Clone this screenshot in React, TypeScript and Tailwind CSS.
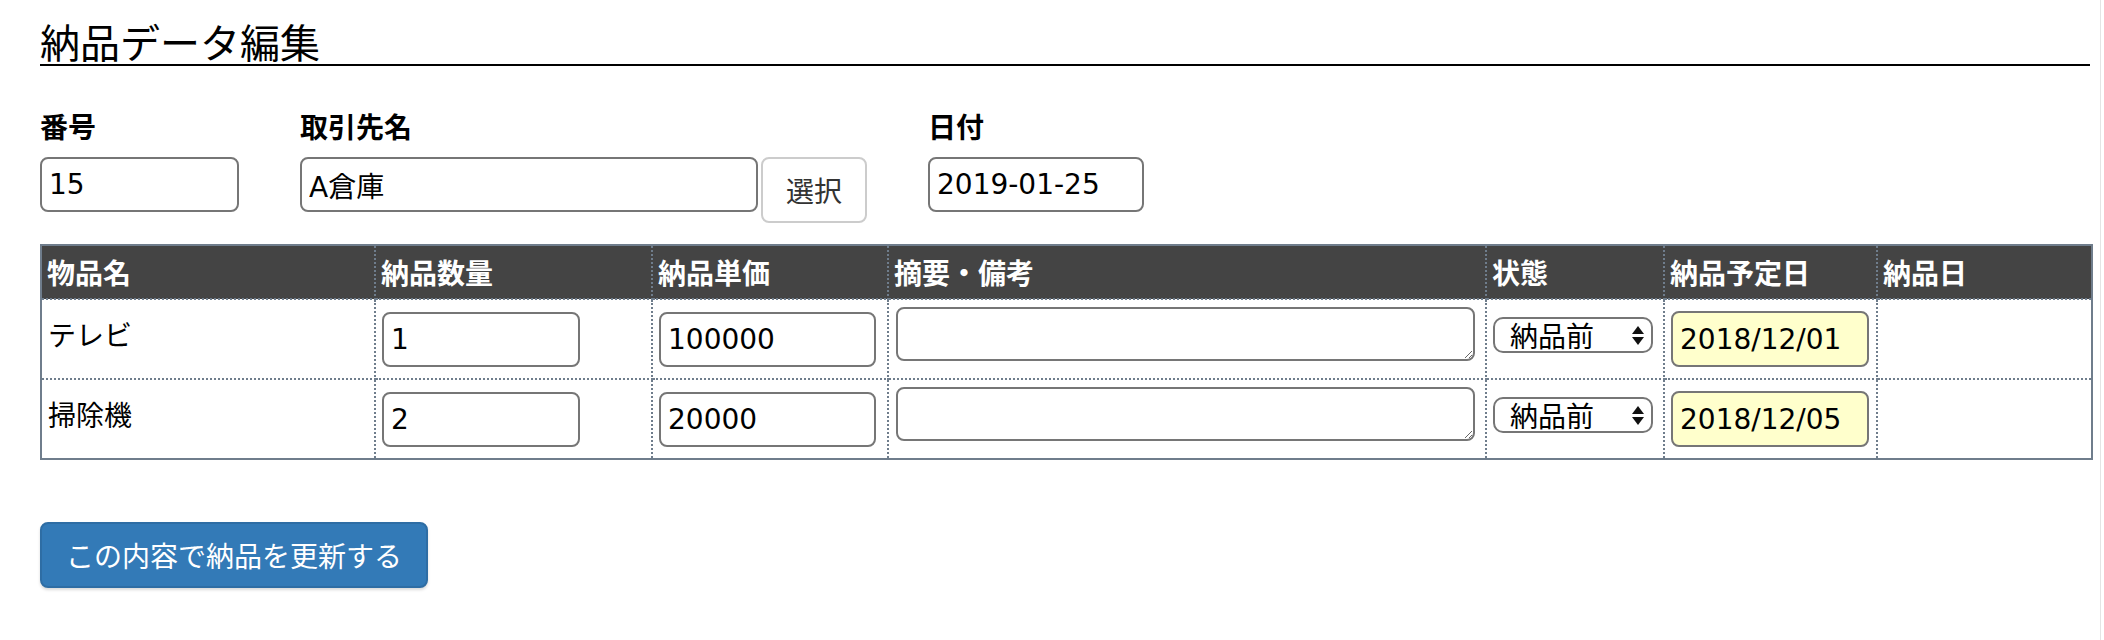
import React from 'react';

const items = [
  { id: 1, name: 'テレビ', qty: '1', price: '100000', plan: '2018/12/01' },
  { id: 2, name: '掃除機', qty: '2', price: '20000', plan: '2018/12/05' },
];

const columns = [
  { label: '物品名', width: 334 },
  { label: '納品数量', width: 277 },
  { label: '納品単価', width: 236 },
  { label: '摘要・備考', width: 598 },
  { label: '状態', width: 178 },
  { label: '納品予定日', width: 213 },
  { label: '納品日', width: 215 },
];

const jp = { fontFamily: "'Noto Sans CJK JP', sans-serif" };

const inputCls =
  "h-[55px] rounded-[8px] border-2 border-[#767676] px-[7px] text-[28px] text-black outline-none font-['DejaVu_Sans','Noto_Sans_CJK_JP',sans-serif]";

const StatusSelect = () => (
  <div className="flex h-[36px] w-[160px] items-start justify-between overflow-hidden rounded-[10px] border-2 border-[#767676] bg-white pl-[15px] pr-[7px]">
    <span className="text-[28px] leading-[32px] text-black">納品前</span>
    <svg width="12" height="20" viewBox="0 0 12 20" className="mt-[7px] shrink-0">
      <polygon points="6,0 12,8 0,8" fill="#111" />
      <polygon points="0,11 12,11 6,19" fill="#111" />
    </svg>
  </div>
);

const DeliveryEdit = () => {
  return (
    <div className="min-h-[640px] w-[2101px] border-r border-[#e4e4e4] bg-white pl-[40px] pr-[10px] pt-[18px] text-black" style={jp}>
      <h2 className="border-b-2 border-black text-[40px] font-normal leading-[46px]">納品データ編集</h2>

      <div className="mt-[46px] flex items-start">
        <div className="w-[199px]">
          <label className="mb-[17px] block text-[28px] font-bold leading-[28px]">番号</label>
          <input defaultValue="15" className={inputCls + ' w-[199px] h-[54px] bg-white'} />
        </div>
        <div className="ml-[61px]">
          <label className="mb-[17px] block text-[28px] font-bold leading-[28px]">取引先名</label>
          <div className="flex items-start">
            <input defaultValue="A倉庫" className={inputCls + ' w-[458px] h-[54px] bg-white'} />
            <button className="ml-[3px] h-[66px] w-[106px] rounded-[8px] border-2 border-[#cccccc] bg-white text-[28px] text-[#333]">
              選択
            </button>
          </div>
        </div>
        <div className="ml-[61px]">
          <label className="mb-[17px] block text-[28px] font-bold leading-[28px]">日付</label>
          <input defaultValue="2019-01-25" className={inputCls + ' w-[216px] h-[54px] bg-white'} />
        </div>
      </div>

      <table className="mt-[21px] w-[2051px] table-fixed border-collapse border-2 border-solid border-[#6f7d8c]">
        <colgroup>
          {columns.map(c => (
            <col key={c.label} style={{ width: c.width }} />
          ))}
        </colgroup>
        <thead>
          <tr className="h-[54px] bg-[#444444]">
            {columns.map(c => (
              <th
                key={c.label}
                className="border-2 border-dotted border-[#6f7d8c] px-[5px] text-left align-middle text-[28px] font-bold leading-[32px] text-white"
              >
                {c.label}
              </th>
            ))}
          </tr>
        </thead>
        <tbody>
          {items.map(item => (
            <tr key={item.id} className="h-[80px]">
              <td className="border-2 border-dotted border-[#6f7d8c] px-[6px] align-middle text-[28px] leading-[32px]">
                <span className="relative -top-[5px]">{item.name}</span>
              </td>
              <td className="border-2 border-dotted border-[#6f7d8c] px-[6px] align-middle">
                <input defaultValue={item.qty} className={inputCls + ' block w-[198px] bg-white'} />
              </td>
              <td className="border-2 border-dotted border-[#6f7d8c] px-[6px] align-middle">
                <input defaultValue={item.price} className={inputCls + ' block w-[217px] bg-white'} />
              </td>
              <td className="border-2 border-dotted border-[#6f7d8c] px-[7px] align-middle">
                <textarea className="mb-[10px] block h-[54px] w-[579px] resize rounded-[8px] border-2 border-[#767676] bg-white outline-none" />
              </td>
              <td className="border-2 border-dotted border-[#6f7d8c] px-[6px] align-middle">
                <div className="mb-[8px]">
                  <StatusSelect />
                </div>
              </td>
              <td className="border-2 border-dotted border-[#6f7d8c] px-[6px] align-middle">
                <input defaultValue={item.plan} className={inputCls + ' block w-[198px] h-[56px] bg-[#ffffcc]'} />
              </td>
              <td className="border-2 border-dotted border-[#6f7d8c] px-[6px] align-middle"></td>
            </tr>
          ))}
        </tbody>
      </table>

      <button className="mt-[62px] h-[66px] rounded-[8px] border-2 border-[#2e6da4] bg-[#337ab7] px-[24px] text-[28px] leading-[32px] text-white shadow-[0_2px_3px_rgba(0,0,0,0.15)]">
        この内容で納品を更新する
      </button>
    </div>
  );
};

export default function App() {
  return <DeliveryEdit />;
}
